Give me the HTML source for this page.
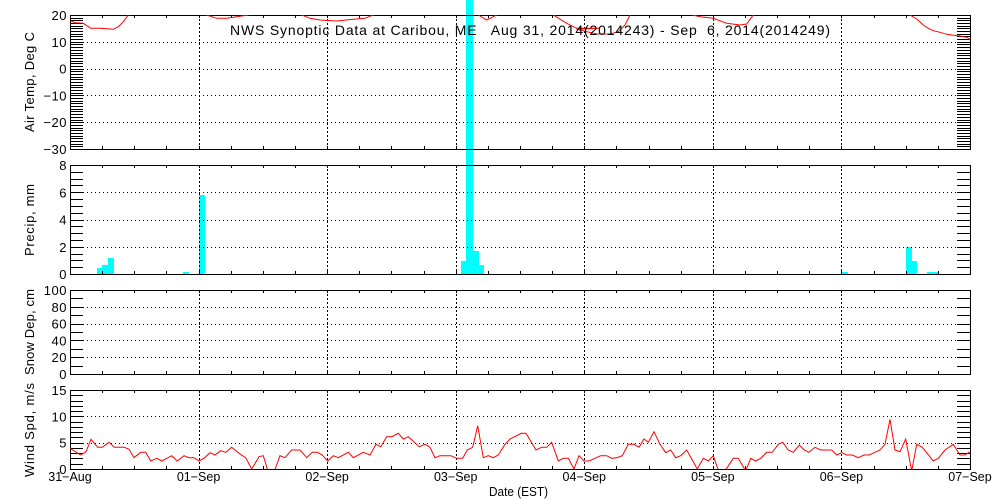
<!DOCTYPE html>
<html><head><meta charset="utf-8"><style>
html,body{margin:0;padding:0;background:#fff;width:1000px;height:500px;overflow:hidden}
svg text{font-family:"Liberation Sans","DejaVu Sans",sans-serif;font-size:12px;fill:#000}
</style></head><body>
<svg id="s" width="1000" height="500" xmlns="http://www.w3.org/2000/svg">
<defs>
<clipPath id="c1"><rect x="70" y="15" width="900" height="134"/></clipPath>
<clipPath id="c4"><rect x="70" y="390" width="900" height="79"/></clipPath>
</defs>
<g id="g"></g>
<text x="230" y="35" textLength="600" lengthAdjust="spacing" style="font-size:14px" xml:space="preserve">NWS Synoptic Data at Caribou, ME   Aug 31, 2014(2014243) - Sep  6, 2014(2014249)</text>
<text x="489" y="496" textLength="59" lengthAdjust="spacingAndGlyphs" style="font-size:13px">Date (EST)</text>
<text transform="translate(34,82) rotate(-90)" text-anchor="middle" textLength="100" lengthAdjust="spacing" style="font-size:13px">Air Temp, Deg C</text>
<text transform="translate(34,220) rotate(-90)" text-anchor="middle" textLength="72" lengthAdjust="spacing" style="font-size:13px">Precip, mm</text>
<text transform="translate(34,332) rotate(-90)" text-anchor="middle" textLength="86" lengthAdjust="spacing" style="font-size:13px">Snow Dep, cm</text>
<text transform="translate(34,430) rotate(-90)" text-anchor="middle" textLength="94" lengthAdjust="spacing" style="font-size:13px">Wind Spd, m/s</text>
</svg>
<script>
var g=document.getElementById('g'),h='';
var L=70,R=970,D=900/7;
function line(x1,y1,x2,y2,extra){h+='<line x1="'+x1+'" y1="'+y1+'" x2="'+x2+'" y2="'+y2+'" stroke="#000" stroke-width="1" '+(extra||'')+'/>';}
function panel(top,bot,vmin,vmax,minor,major){
  var sc=(bot-top)/(vmax-vmin);
  function Y(v){return bot-(v-vmin)*sc;}
  for(var v=vmin+major;v<vmax-0.001;v+=major){var y=Math.round(Y(v))+0.5;line(83,y,957,y,'stroke-dasharray="1,3"');}
  for(var i=1;i<7;i++){var x=Math.round(L+i*D)+0.5;line(x,top,x,bot,'stroke-dasharray="2,2"');}
  for(var v=vmin;v<=vmax+0.001;v+=minor){var y=Math.round(Y(v))+0.5;line(L,y,83,y);line(957,y,R,y);}
  for(var i=1;i<28;i++){var x=Math.round(L+i*D/4)+0.5;line(x,top,x,top+3);line(x,bot,x,bot-3);}
  h+='<rect x="70.5" y="'+(top+0.5)+'" width="900" height="'+(bot-top)+'" fill="none" stroke="#000" stroke-width="1"/>';
  for(var v=vmin;v<=vmax+0.001;v+=major){h+='<text x="67" y="'+(Y(v)+5)+'" text-anchor="end" style="font-size:13px;letter-spacing:0.5px">'+(v<0?'\u2212'+(-v):v)+'</text>';}
}
var bars=[[97,102,268],[102,108,265],[108,114,258],[183,189,272],[199,205,195],[461,466,261],[466,473,0],[473,479,251],[479,484,265],[842,848,272],[906,912,247],[912,917,261],[927,939,272]];
bars.forEach(function(b){h+='<rect x="'+b[0]+'" y="'+b[2]+'" width="'+(b[1]-b[0])+'" height="'+(274-b[2])+'" fill="#00ffff"/>';});
panel(15,149,-30,20,1,10);
panel(165,274,0,8,0.5,2);
panel(290,374,0,100,10,20);
panel(390,469,0,15,1,5);
function pts(o,arr){return arr.map(function(p){return (o[0]+p[0]/3).toFixed(1)+','+(o[1]+p[1]/3).toFixed(1);}).join(' ');}
function pl(s,clip){h+='<polyline points="'+s+'" fill="none" stroke="#ff0000" stroke-width="1" clip-path="url(#'+clip+')"/>';}
pl(pts([0,0],[[210,62],[225,68],[250,70],[272,85],[300,85],[340,88],[355,80],[370,65],[385,45],[395,30]]),'c1');
pl(pts([200,0],[[10,35],[20,45],[50,55],[80,55],[110,50],[145,45],[155,35]]),'c1');
pl(pts([200,0],[[295,35],[305,45],[330,55],[360,60],[410,63],[460,58],[495,55],[520,45],[530,35]]),'c1');
pl(pts([200,0],[[825,35],[835,45],[860,60],[890,45],[900,35]]),'c1');
pl(pts([200,0],[[1045,35],[1060,45],[1100,70],[1130,85],[1160,85],[1200,85]])+' '+pts([500,0],[[230,88],[260,95],[290,102],[330,102],[355,95],[375,75],[390,45],[398,35]]),'c1');
pl(pts([500,0],[[568,35],[578,45],[600,50],[640,55],[680,70],[720,75],[740,72],[760,45],[768,35]]),'c1');
pl(pts([800,0],[[320,35],[330,45],[350,57],[370,75],[385,85],[400,92],[420,97],[440,103],[460,106],[480,108],[500,112],[510,118]]),'c1');
var w1=[[30,190],[62,210],[78,200],[93,163],[113,187],[127,187],[147,172],[163,187],[193,187],[207,193],[222,218],[242,202],[257,202],[272,228],[290,220],[305,228],[335,212],[352,228],[372,212],[387,218],[402,218],[417,228],[432,220],[450,203],[465,210],[482,197],[497,202],[515,187],[537,205],[557,218],[575,252],[597,215],[610,212],[625,262],[642,262],[660,212],[675,218],[695,195],[720,195],[740,218],[757,202],[772,202],[787,210],[803,228],[820,212],[835,218],[865,202],[880,218],[910,202],[930,210],[948,178],[962,185],[980,155],[995,155],[1015,145],[1030,162],[1045,155],[1078,185],[1095,178],[1110,187],[1125,218],[1140,212],[1172,212],[1190,220],[1208,220],[1222,195],[1238,187],[1253,122],[1270,218],[1285,212],[1300,218],[1315,210],[1335,178],[1350,162],[1380,147]];
var w2=[[35,145],[48,145],[78,195],[95,187],[110,187],[125,172],[145,228],[160,220],[175,220],[192,252],[207,212],[222,228],[237,228],[272,212],[290,212],[305,220],[320,218],[337,212],[355,178],[372,178],[387,187],[402,162],[415,172],[432,140],[450,178],[467,203],[482,195],[497,218],[512,212],[530,195],[562,252],[580,220],[595,228],[610,212],[630,270],[650,250],[670,220],[685,220],[707,258],[722,220],[737,228],[752,220],[770,202],[787,202],[805,178],[818,172],[835,195],[850,202],[868,180],[883,195],[897,202],[915,187],[932,195],[965,195],[980,210],[995,203],[1010,210],[1027,210],[1045,218],[1062,210],[1077,210],[1095,202],[1110,195],[1125,178],[1140,103],[1155,195],[1170,200],[1187,162],[1205,258],[1220,178],[1237,187],[1270,228],[1285,220],[1305,195],[1330,178],[1350,210],[1365,210],[1380,200]];
pl(pts([60,385],w1)+' '+pts([510,385],w2),'c4');
var dl=['31-Aug','01-Sep','02-Sep','03-Sep','04-Sep','05-Sep','06-Sep','07-Sep'];
for(var i=0;i<8;i++){h+='<text x="'+(L+i*D)+'" y="481" text-anchor="middle" style="font-size:12.5px">'+dl[i].replace('-','\u2212')+'</text>';}
g.innerHTML=h;
</script>
</body></html>
